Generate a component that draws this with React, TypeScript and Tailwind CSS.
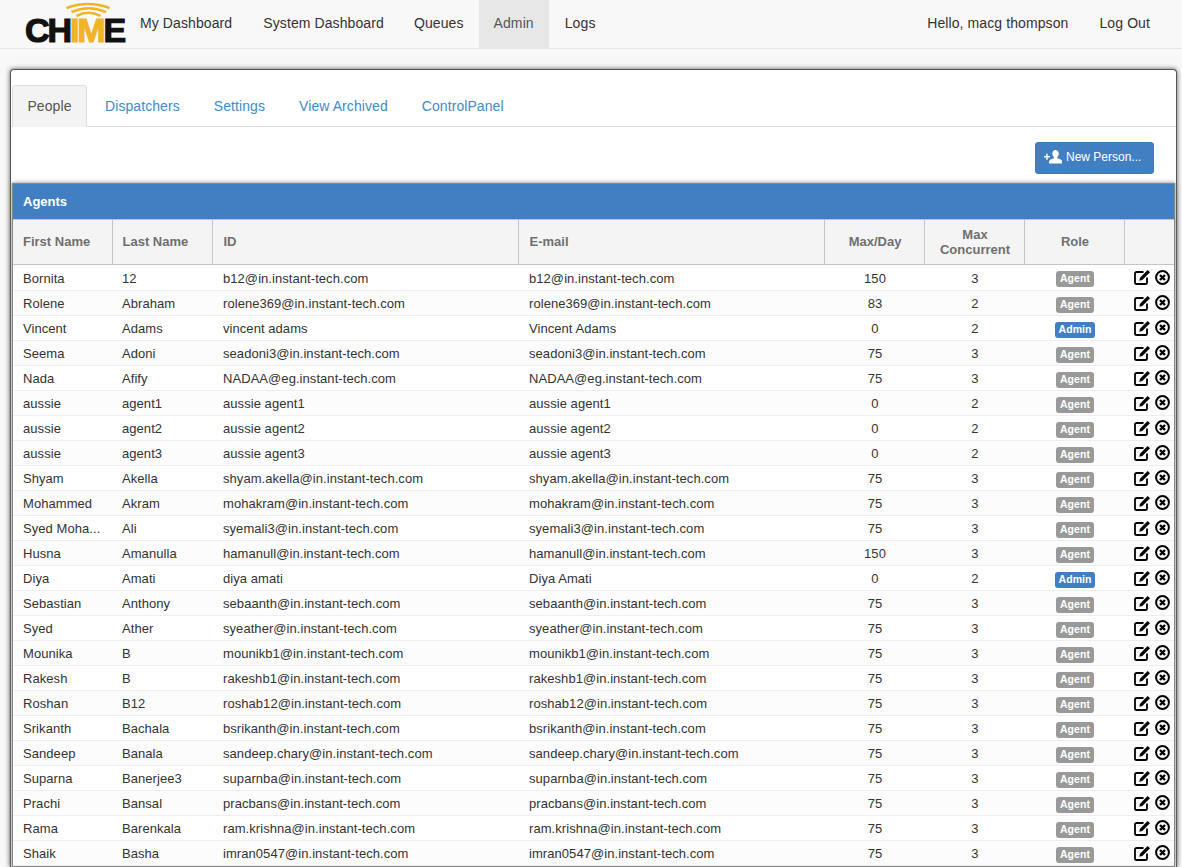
import React from "react";

const rows: [string, string, string, string, string, string, string?][] = [
  ["Bornita", "12", "b12@in.instant-tech.com", "b12@in.instant-tech.com", "150", "3"],
  ["Rolene", "Abraham", "rolene369@in.instant-tech.com", "rolene369@in.instant-tech.com", "83", "2"],
  ["Vincent", "Adams", "vincent adams", "Vincent Adams", "0", "2", "Admin"],
  ["Seema", "Adoni", "seadoni3@in.instant-tech.com", "seadoni3@in.instant-tech.com", "75", "3"],
  ["Nada", "Afify", "NADAA@eg.instant-tech.com", "NADAA@eg.instant-tech.com", "75", "3"],
  ["aussie", "agent1", "aussie agent1", "aussie agent1", "0", "2"],
  ["aussie", "agent2", "aussie agent2", "aussie agent2", "0", "2"],
  ["aussie", "agent3", "aussie agent3", "aussie agent3", "0", "2"],
  ["Shyam", "Akella", "shyam.akella@in.instant-tech.com", "shyam.akella@in.instant-tech.com", "75", "3"],
  ["Mohammed", "Akram", "mohakram@in.instant-tech.com", "mohakram@in.instant-tech.com", "75", "3"],
  ["Syed Mohammed", "Ali", "syemali3@in.instant-tech.com", "syemali3@in.instant-tech.com", "75", "3"],
  ["Husna", "Amanulla", "hamanull@in.instant-tech.com", "hamanull@in.instant-tech.com", "150", "3"],
  ["Diya", "Amati", "diya amati", "Diya Amati", "0", "2", "Admin"],
  ["Sebastian", "Anthony", "sebaanth@in.instant-tech.com", "sebaanth@in.instant-tech.com", "75", "3"],
  ["Syed", "Ather", "syeather@in.instant-tech.com", "syeather@in.instant-tech.com", "75", "3"],
  ["Mounika", "B", "mounikb1@in.instant-tech.com", "mounikb1@in.instant-tech.com", "75", "3"],
  ["Rakesh", "B", "rakeshb1@in.instant-tech.com", "rakeshb1@in.instant-tech.com", "75", "3"],
  ["Roshan", "B12", "roshab12@in.instant-tech.com", "roshab12@in.instant-tech.com", "75", "3"],
  ["Srikanth", "Bachala", "bsrikanth@in.instant-tech.com", "bsrikanth@in.instant-tech.com", "75", "3"],
  ["Sandeep", "Banala", "sandeep.chary@in.instant-tech.com", "sandeep.chary@in.instant-tech.com", "75", "3"],
  ["Suparna", "Banerjee3", "suparnba@in.instant-tech.com", "suparnba@in.instant-tech.com", "75", "3"],
  ["Prachi", "Bansal", "pracbans@in.instant-tech.com", "pracbans@in.instant-tech.com", "75", "3"],
  ["Rama", "Barenkala", "ram.krishna@in.instant-tech.com", "ram.krishna@in.instant-tech.com", "75", "3"],
  ["Shaik", "Basha", "imran0547@in.instant-tech.com", "imran0547@in.instant-tech.com", "75", "3"],
];

function Logo() {
  return (
    <div className="relative h-[48px] w-[102px] shrink-0">
      <svg className="absolute left-[40px] top-0" width="48" height="18" viewBox="0 0 48 18" fill="none" stroke="#f0b429" strokeWidth="2.6">
        <path d="M1.5 8 Q23 0 44.5 8" />
        <path d="M6.5 12 Q23.5 4.5 41 12" />
        <path d="M11.5 16 Q23.5 9.5 35.5 16" />
      </svg>
      <div className="absolute left-0 top-[15px] flex font-['Liberation_Sans',sans-serif] text-[34px] font-black leading-[31px] tracking-[-2.1px] [-webkit-text-stroke:1.2px_currentColor]">
        <span className="text-[#111]">CH</span>
        <span className="text-[#f0b429]">IM</span>
        <span className="text-[#111]">E</span>
      </div>
    </div>
  );
}

function UserAdd() {
  return (
    <svg width="18" height="14" viewBox="0 0 18 14" fill="white" className="shrink-0">
      <path d="M0 6h2.2V3.8h1.5V6H6v1.5H3.7v2.2H2.2V7.5H0z" />
      <path d="M11.5 0c2 0 3.3 1.5 3.3 3.6 0 1.5-.6 2.8-1.4 3.5v1.2c1.8.6 4.1 1.4 4.6 2.5.2.9.2 1.8.2 2.7H5c0-.9 0-1.8.3-2.7.5-1.1 2.7-1.9 4.5-2.5V7.1C9 6.4 8.3 5.1 8.3 3.6 8.3 1.5 9.6 0 11.5 0z" />
    </svg>
  );
}

function EditIcon() {
  return (
    <svg width="17" height="16" viewBox="0 0 17 16" className="shrink-0">
      <path d="M9.5 3H2.6C1.7 3 1 3.7 1 4.6v8.8c0 .9.7 1.6 1.6 1.6h8.8c.9 0 1.6-.7 1.6-1.6V8.5" fill="none" stroke="#000" strokeWidth="1.8" />
      <path d="M13.6.9 16 3.3 8.3 11l-3 .7.7-3z" fill="#000" />
    </svg>
  );
}

function CloseIcon() {
  return (
    <svg width="15" height="15" viewBox="0 0 15 15" className="shrink-0">
      <circle cx="7.5" cy="7.5" r="6.4" fill="none" stroke="#000" strokeWidth="2" />
      <path d="M5 5l5 5M10 5l-5 5" stroke="#000" strokeWidth="2.4" />
    </svg>
  );
}

const th = "border-r border-[#c4c4c4] align-middle font-bold text-[#6f6f6f]";
const thL = th + " pl-[10px] pr-[10px] text-left";
const thC = th + " pl-[12px] pr-[10px] text-center";
const navLink = "flex items-center px-[15px] pb-[2px]";
const tab = "flex items-center px-[15px] pt-[2px]";

export default function App() {
  return (
    <div className="h-[867px] overflow-hidden bg-[#f8f8f8] font-['Liberation_Sans',Arial,sans-serif] text-[13px] text-[#333]">
      <nav className="flex h-[49px] items-stretch border-b border-[#e7e7e7] bg-[#f8f8f8] pl-[25px] text-[14px] tracking-[0.1px] text-[#333]">
        <Logo />
        <div className="ml-[-2px] flex">
          <a className={navLink}>My Dashboard</a>
          <a className={navLink + " ml-[1px]"}>System Dashboard</a>
          <a className={navLink}>Queues</a>
          <a className={navLink + " bg-[#e7e7e7] text-[#555]"}>Admin</a>
          <a className={navLink + " ml-[1px]"}>Logs</a>
        </div>
        <div className="ml-auto flex pr-[17px]">
          <a className={navLink + " mr-[1px]"}>Hello, macg thompson</a>
          <a className={navLink}>Log Out</a>
        </div>
      </nav>
      <main className="ml-[10px] mr-[5px] mt-[20px] rounded-t-[4px] border-x border-t border-[#555] bg-white pt-[15px] shadow-[0_0_5px_#555]">
        <div className="flex h-[42px] items-stretch border-b border-[#ddd] pl-[1px] text-[14px] tracking-[0.08px] text-[#428bca]">
          <a className="flex h-[42px] w-[75px] items-center justify-center rounded-t-[4px] border-x border-t border-[#ddd] bg-[#f3f3f3] text-[#555]">People</a>
          <a className={"ml-[3px] " + tab}>Dispatchers</a>
          <a className={"ml-[4px] " + tab}>Settings</a>
          <a className={"ml-[4px] " + tab}>View Archived</a>
          <a className={"ml-[4px] " + tab}>ControlPanel</a>
        </div>
        <div className="flex h-[56px] justify-end pr-[22px] pt-[15px]">
          <button className="flex h-[32px] w-[119px] items-center gap-[4px] rounded-[3px] border border-[#357ebd] bg-[#417fc2] pb-[2px] pl-[8px] text-[12px] text-white">
            <UserAdd />
            New Person...
          </button>
        </div>
        <section className="mx-[1px] border border-[#888] shadow-[0_0_4px_#777]">
          <div className="flex h-[35px] items-center bg-[#417fc2] pl-[10px] font-bold text-white">Agents</div>
          <table className="w-full table-fixed border-collapse">
            <colgroup>
              <col className="w-[99px]" />
              <col className="w-[100px]" />
              <col className="w-[306px]" />
              <col className="w-[306px]" />
              <col className="w-[100px]" />
              <col className="w-[100px]" />
              <col className="w-[100px]" />
              <col />
            </colgroup>
            <thead>
              <tr className="h-[45px] border-b border-t border-[#c4c4c4] bg-[#f4f4f4]">
                <th className={thL}>First Name</th>
                <th className={thL}>Last Name</th>
                <th className={thL + " pl-[11px]"}>ID</th>
                <th className={thL + " pl-[11px]"}>E-mail</th>
                <th className={thC}>Max/Day</th>
                <th className={thC + " leading-[15px]"}>Max<br />Concurrent</th>
                <th className={thC}>Role</th>
                <th />
              </tr>
            </thead>
            <tbody className="tracking-[0.06px]">
              {rows.map((r, i) => (
                <tr key={i} className={(i === 0 ? "h-[26px] " : "h-[25px] ") + "border-b border-[#eee] " + (i % 2 ? "bg-[#fcfcfc]" : "bg-white")}>
                  <td className="overflow-hidden text-ellipsis whitespace-nowrap pl-[10px] pr-[10px] pt-[2px]">{r[0] === "Syed Mohammed" ? "Syed Moha..." : r[0]}</td>
                  <td className="pl-[10px] pr-[10px] pt-[2px]">{r[1]}</td>
                  <td className="pl-[11px] pr-[10px] pt-[2px]">{r[2]}</td>
                  <td className="pl-[11px] pr-[10px] pt-[2px]">{r[3]}</td>
                  <td className="pl-[12px] pr-[10px] pt-[2px] text-center">{r[4]}</td>
                  <td className="pl-[12px] pr-[10px] pt-[2px] text-center">{r[5]}</td>
                  <td className="pl-[12px] pr-[10px] pt-[2px] text-center">
                    <span className={"inline-block rounded-[3px] px-[4px] pb-[1px] align-middle text-[10.5px] font-bold leading-[15px] text-white " + (r[6] ? "bg-[#417fc2]" : "bg-[#999]")}>
                      {r[6] ?? "Agent"}
                    </span>
                  </td>
                  <td className="pb-[1px] pl-[10px] pr-0">
                    <div className="flex items-center gap-[4px]">
                      <EditIcon />
                      <CloseIcon />
                    </div>
                  </td>
                </tr>
              ))}
            </tbody>
          </table>
        </section>
      </main>
    </div>
  );
}
